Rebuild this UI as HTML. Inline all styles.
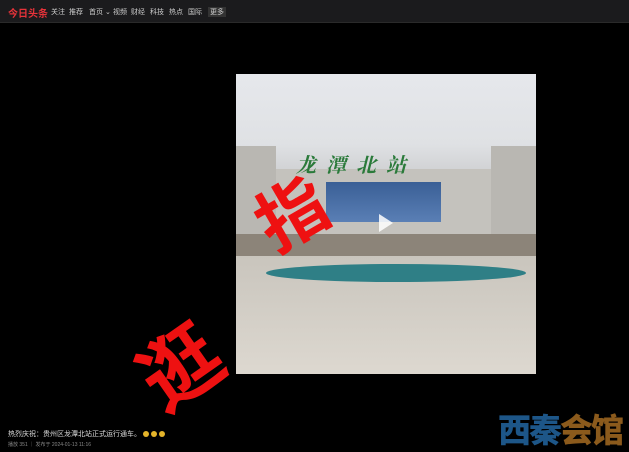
<!DOCTYPE html>
<html><head><meta charset="utf-8"><style>
*{margin:0;padding:0;box-sizing:border-box}
body{width:629px;height:451px;background:#000;overflow:hidden;position:relative;font-family:"Liberation Sans","Noto Sans CJK SC",sans-serif}
.top{position:absolute;left:0;top:0;width:629px;height:23px;background:#1b1b1d;border-bottom:1px solid #2a2a2a}
.top span{position:absolute;top:7px;font-size:7px;color:#ccc}
.logo{position:absolute;left:8px;top:5px;font-size:10px;color:#e8333a;font-weight:bold}
.pic{position:absolute;left:236px;top:74px;width:300px;height:300px;overflow:hidden;background:linear-gradient(#e6e8ec 0,#dfe1e4 70px,#cfd0d2 100px)}
.b{position:absolute}
.red{position:absolute;color:#ee1111;font-weight:bold;font-family:"Noto Sans CJK SC",sans-serif}
.foot1{position:absolute;left:8px;top:429px;font-size:7px;color:#ddd}
.foot2{position:absolute;left:8px;top:441px;font-size:5px;color:#888}
.dot{display:inline-block;width:6px;height:6px;border-radius:50%;background:#e4b42a;margin-left:2px;vertical-align:middle}
</style></head><body>
<div class="top">
<div class="logo">今日头条</div>
<span style="left:51px">关注</span><span style="left:69px">推荐</span><span style="left:89px">首页 ⌄</span>
<span style="left:113px">视频</span><span style="left:131px">财经</span><span style="left:150px">科技</span>
<span style="left:169px">热点</span><span style="left:188px">国际</span><span style="left:208px;background:#333;padding:0 2px">更多</span>
</div>
<div class="pic">
<div class="b" style="left:0;top:72px;width:40px;height:90px;background:#b9b7b2"></div>
<div class="b" style="right:0;top:72px;width:45px;height:90px;background:#b9b7b2"></div>
<div class="b" style="left:40px;top:95px;width:215px;height:70px;background:#c4c2bd"></div>
<div class="b" style="left:90px;top:108px;width:115px;height:40px;background:linear-gradient(#3a5f96,#5a7fb5)"></div>
<div class="b" style="left:60px;top:75px;width:180px;height:20px;font-size:20px;color:#2a7a3a;font-style:italic;font-weight:bold;letter-spacing:10px;font-family:'Noto Serif CJK SC',serif">龙潭北站</div>
<div class="b" style="left:0;top:160px;width:300px;height:22px;background:#8c8479"></div>
<div class="b" style="left:0;top:182px;width:300px;height:118px;background:linear-gradient(#c9c5bd,#ddd8d0)"></div>
<div class="b" style="left:30px;top:190px;width:260px;height:18px;border-radius:50%;background:#2f7f86"></div>
<div class="b" style="left:143px;top:140px;width:0;height:0;border-left:14px solid rgba(255,255,255,.85);border-top:9px solid transparent;border-bottom:9px solid transparent"></div>
</div>
<div class="red" style="left:255px;top:160px;font-size:70px;transform:rotate(-30deg)">指</div>
<div class="red" style="left:138px;top:305px;font-size:80px;transform:rotate(-35deg)">逛</div>
<div class="foot1">热烈庆祝：贵州区龙潭北站正式运行通车。<span class="dot"></span><span class="dot"></span><span class="dot"></span></div>
<div class="foot2">播放 351 ｜ 发布于 2024-01-13 11:16</div>
<div style="position:absolute;left:498px;top:410px;font-size:33px;font-weight:900;letter-spacing:-2px;font-family:'Noto Sans CJK SC',sans-serif;line-height:36px"><span style="color:#1d5688">西秦</span><span style="color:#8b5a1c">会馆</span></div>
</body></html>
